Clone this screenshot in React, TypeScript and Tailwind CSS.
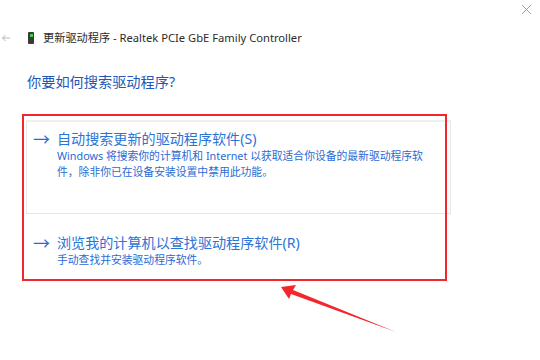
import React from "react";

const font = { fontFamily: '"Noto Sans", "Noto Sans CJK SC", sans-serif' };

export default function App() {
  return (
    <div
      className="relative w-[540px] h-[360px] bg-white overflow-hidden"
      style={font}
    >
      {/* close */}
      <div className="absolute right-[8px] top-[4px]">
        <svg width="11" height="11" viewBox="0 0 11 11">
          <path d="M1 1 L10 10 M10 1 L1 10" stroke="#a0a0a0" strokeWidth="1" />
        </svg>
      </div>

      {/* title row */}
      <div className="flex items-center h-[16px] mt-[30px]">
        <svg width="10" height="8" viewBox="0 0 10 8" className="ml-[1px]">
          <path d="M9 4 H1.5 M4.5 1 L1.5 4 L4.5 7" stroke="#b5b5b5" strokeWidth="1" fill="none" />
        </svg>
        <div className="ml-[17px] w-[6px] h-[12px] bg-[#3a3a3a] rounded-[1px] flex justify-center pt-[2px]">
          <div className="w-[3px] h-[3px] bg-[#3fd23f]" />
        </div>
        <div className="ml-[9px] text-[11.2px] text-[#2b2b2b] leading-none">
          更新驱动程序 - Realtek PCIe GbE Family Controller
        </div>
      </div>

      {/* heading */}
      <div className="ml-[27px] mt-[27px] text-[14.2px] leading-[18px] text-[#2357b5]">
        你要如何搜索驱动程序?
      </div>

      {/* option 1 card */}
      <div className="ml-[26px] mt-[29px] w-[425px] h-[94px] border border-[#e6e6e6] border-t-[2px] border-t-[#efefef] bg-white pt-[9px]">
        <div className="flex items-center h-[16px]">
          <span className="ml-[6px] w-[20px] text-[#1f6fd6] text-[17px] leading-none">→</span>
          <span className="ml-[4px] text-[14.1px] leading-none text-[#2a74d6]">
            自动搜索更新的驱动程序软件(S)
          </span>
        </div>
        <div className="ml-[30px] mt-[1px] text-[10.8px] leading-[16px] text-[#2c6ad4]">
          Windows 将搜索你的计算机和 Internet 以获取适合你设备的最新驱动程序软
          <br />
          件，除非你已在设备安装设置中禁用此功能。
        </div>
      </div>

      {/* option 2 */}
      <div className="ml-[26px] mt-[21px] w-[425px]">
        <div className="flex items-center h-[16px]">
          <span className="ml-[7px] w-[20px] text-[#1f6fd6] text-[17px] leading-none">→</span>
          <span className="ml-[4px] text-[14.1px] leading-none text-[#2a74d6]">
            浏览我的计算机以查找驱动程序软件(R)
          </span>
        </div>
        <div className="ml-[31px] mt-[2px] text-[10.8px] leading-[14px] text-[#2c6ad4]">
          手动查找并安装驱动程序软件。
        </div>
      </div>

      {/* red annotation box */}
      <div className="absolute left-[22px] top-[114px] w-[425px] h-[167px] border-2 border-[#f2272c] pointer-events-none" />

      {/* red annotation arrow */}
      <svg
        className="absolute left-0 top-0 pointer-events-none"
        width="540"
        height="360"
        viewBox="0 0 540 360"
      >
        <polygon
          points="281,287 296,285 293,290 396,332 291,294 289,299"
          fill="#f2272c"
        />
      </svg>
    </div>
  );
}
